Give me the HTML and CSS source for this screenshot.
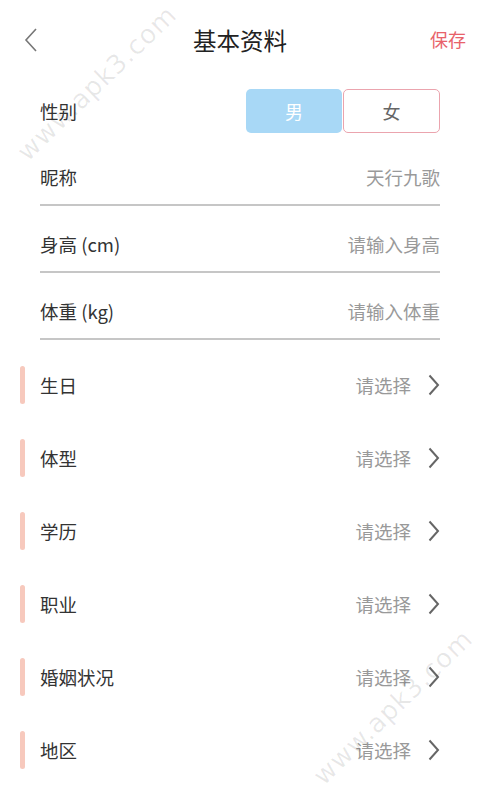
FILE: index.html
```html
<!DOCTYPE html>
<html lang="zh-CN">
<head>
    <meta charset="UTF-8">
    <meta name="viewport" content="width=device-width, initial-scale=1.0">
    <title>基本资料</title>
    <link rel="stylesheet" href="styles.css">
</head>
<body>
    <div class="page">
        <header class="topbar">
            <span class="back">
                <svg width="14" height="24" viewBox="0 0 14 24"><path d="M12 1 L2 12 L12 23" fill="none" stroke="#777" stroke-width="1.6"/></svg>
            </span>
            <h1>基本资料</h1>
            <span class="save">保存</span>
        </header>

        <div class="form">
            <div class="gender-row">
                <span class="label">性别</span>
                <div class="toggle">
                    <span class="opt opt-on">男</span>
                    <span class="opt opt-off">女</span>
                </div>
            </div>
            <div class="field">
                <span class="label">昵称</span>
                <span class="value">天行九歌</span>
            </div>
            <div class="field">
                <span class="label">身高 (cm)</span>
                <span class="value">请输入身高</span>
            </div>
            <div class="field">
                <span class="label">体重 (kg)</span>
                <span class="value">请输入体重</span>
            </div>
        </div>

        <div class="picks">
            <div class="pick"><i class="mark"></i><span class="label">生日</span><span class="value">请选择</span><svg class="arrow" width="12" height="22" viewBox="0 0 12 22"><path d="M1.5 1.5 L10 11 L1.5 20.5" fill="none" stroke="#666" stroke-width="2"/></svg></div>
            <div class="pick"><i class="mark"></i><span class="label">体型</span><span class="value">请选择</span><svg class="arrow" width="12" height="22" viewBox="0 0 12 22"><path d="M1.5 1.5 L10 11 L1.5 20.5" fill="none" stroke="#666" stroke-width="2"/></svg></div>
            <div class="pick"><i class="mark"></i><span class="label">学历</span><span class="value">请选择</span><svg class="arrow" width="12" height="22" viewBox="0 0 12 22"><path d="M1.5 1.5 L10 11 L1.5 20.5" fill="none" stroke="#666" stroke-width="2"/></svg></div>
            <div class="pick"><i class="mark"></i><span class="label">职业</span><span class="value">请选择</span><svg class="arrow" width="12" height="22" viewBox="0 0 12 22"><path d="M1.5 1.5 L10 11 L1.5 20.5" fill="none" stroke="#666" stroke-width="2"/></svg></div>
            <div class="pick"><i class="mark"></i><span class="label">婚姻状况</span><span class="value">请选择</span><svg class="arrow" width="12" height="22" viewBox="0 0 12 22"><path d="M1.5 1.5 L10 11 L1.5 20.5" fill="none" stroke="#666" stroke-width="2"/></svg></div>
            <div class="pick"><i class="mark"></i><span class="label">地区</span><span class="value">请选择</span><svg class="arrow" width="12" height="22" viewBox="0 0 12 22"><path d="M1.5 1.5 L10 11 L1.5 20.5" fill="none" stroke="#666" stroke-width="2"/></svg></div>
        </div>

        <span class="watermark wm-top">www.apk3.com</span>
        <span class="watermark wm-bottom">www.apk3.com</span>
    </div>
</body>
</html>
```

FILE: styles.css
```css
body {
    margin: 0;
    background-color: #fff;
    font-family: "Noto Sans CJK SC", "Noto Sans", sans-serif;
    color: #333;
}

.page {
    position: relative;
    width: 480px;
    height: 800px;
    overflow: hidden;
}

.topbar {
    height: 80px;
    display: flex;
    align-items: center;
    justify-content: space-between;
    padding: 0 14px 0 24px;
    position: relative;
}

.topbar h1 {
    position: absolute;
    left: 0;
    right: 0;
    margin: 0;
    text-align: center;
    font-size: 23.5px;
    font-weight: normal;
    color: #222;
    line-height: 80px;
    pointer-events: none;
}

.back {
    display: flex;
    margin-top: -1px;
}

.save {
    font-size: 18px;
    color: #e8626a;
    margin-top: -2px;
}

.form {
    padding: 0 40px;
}

.label {
    font-size: 18.5px;
    line-height: 24px;
    color: #333;
}

.value {
    font-size: 18.5px;
    line-height: 24px;
    color: #999;
}

.gender-row {
    display: flex;
    align-items: center;
    justify-content: space-between;
    height: 44px;
    margin-top: 9px;
}

.toggle {
    display: flex;
}

.opt {
    width: 96px;
    height: 44px;
    box-sizing: border-box;
    display: flex;
    align-items: center;
    justify-content: center;
    font-size: 18px;
    border-radius: 5px;
}

.opt-on {
    background-color: #a8d8f6;
    color: #fff;
}

.opt-off {
    width: 97px;
    margin-left: 1px;
    border: 1px solid #eba4ae;
    color: #666;
}

.field {
    display: flex;
    justify-content: space-between;
    padding: 26px 0 15px;
    border-bottom: 2px solid #c6c6c6;
}

.gender-row + .field {
    margin-top: 6px;
}

.picks {
    margin-top: 8px;
}

.pick {
    height: 73px;
    display: flex;
    align-items: center;
    padding: 0 40px 0 20px;
}

.mark {
    width: 5px;
    height: 38px;
    border-radius: 3px;
    background-color: #f7c9bd;
    margin-right: 15px;
}

.pick .label {
    flex: 1;
}

.arrow {
    margin-left: 17px;
}

.watermark {
    position: absolute;
    font-family: "DejaVu Sans", sans-serif;
    font-size: 26px;
    color: rgba(0, 0, 0, 0.09);
    letter-spacing: 1px;
    white-space: nowrap;
    pointer-events: none;
}

.wm-top {
    left: -8px;
    top: 68px;
    transform: rotate(-44deg);
}

.wm-bottom {
    left: 288px;
    top: 692px;
    transform: rotate(-44deg);
}
```
